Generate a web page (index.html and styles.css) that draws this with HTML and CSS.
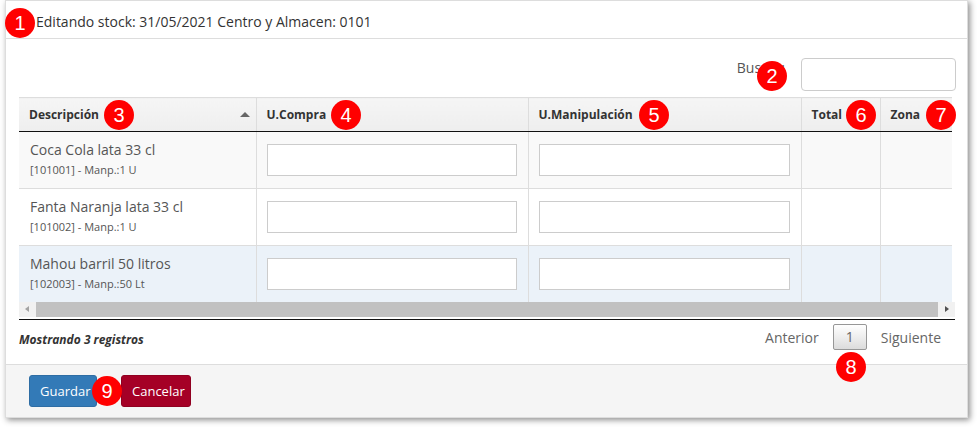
FILE: index.html
```html
<!DOCTYPE html>
<html lang="es">
<head>
    <meta charset="UTF-8">
    <meta name="viewport" content="width=device-width, initial-scale=1.0">
    <title>Editando stock</title>
    <link rel="stylesheet" href="styles.css">
</head>
<body>
    <div class="page">
        <div class="panel">
            <div class="panel-heading">Editando stock: 31/05/2021 Centro y Almacen: 0101</div>
            <div class="panel-body">
                <div class="filter">
                    <label for="buscar">Buscar:</label>
                    <input type="search" id="buscar" class="search">
                </div>
                <div class="scroll">
                    <table class="grid">
                        <colgroup>
                            <col class="c-desc">
                            <col class="c-compra">
                            <col class="c-manip">
                            <col class="c-total">
                            <col class="c-zona">
                        </colgroup>
                        <thead>
                            <tr>
                                <th class="sorted">Descripción <span class="sort-arrow"></span></th>
                                <th>U.Compra</th>
                                <th>U.Manipulación</th>
                                <th>Total</th>
                                <th>Zona</th>
                            </tr>
                        </thead>
                        <tbody>
                            <tr class="odd">
                                <td><div class="name">Coca Cola lata 33 cl</div><div class="sub">[101001] - Manp.:1 U</div></td>
                                <td><input type="text" class="cell-input"></td>
                                <td><input type="text" class="cell-input"></td>
                                <td></td>
                                <td></td>
                            </tr>
                            <tr>
                                <td><div class="name">Fanta Naranja lata 33 cl</div><div class="sub">[101002] - Manp.:1 U</div></td>
                                <td><input type="text" class="cell-input"></td>
                                <td><input type="text" class="cell-input"></td>
                                <td></td>
                                <td></td>
                            </tr>
                            <tr class="hover">
                                <td><div class="name">Mahou barril 50 litros</div><div class="sub">[102003] - Manp.:50 Lt</div></td>
                                <td><input type="text" class="cell-input"></td>
                                <td><input type="text" class="cell-input"></td>
                                <td></td>
                                <td></td>
                            </tr>
                        </tbody>
                    </table>
                </div>
                <div class="scrollbar">
                    <span class="arrow left"></span>
                    <span class="thumb"></span>
                    <span class="arrow right"></span>
                </div>
                <div class="table-foot">
                    <div class="info">Mostrando 3 registros</div>
                    <div class="paging">
                        <span class="page-link">Anterior</span>
                        <span class="page-current">1</span>
                        <span class="page-link">Siguiente</span>
                    </div>
                </div>
            </div>
            <div class="panel-footer">
                <button class="btn btn-primary">Guardar</button>
                <button class="btn btn-danger">Cancelar</button>
            </div>
        </div>

        <span class="badge" style="left: 5px; top: 8px;">1</span>
        <span class="badge" style="left: 757px; top: 61px;">2</span>
        <span class="badge" style="left: 104px; top: 100px;">3</span>
        <span class="badge" style="left: 331px; top: 100px;">4</span>
        <span class="badge" style="left: 639px; top: 100px;">5</span>
        <span class="badge" style="left: 846px; top: 100px;">6</span>
        <span class="badge" style="left: 926px; top: 100px;">7</span>
        <span class="badge" style="left: 836px; top: 352px;">8</span>
        <span class="badge" style="left: 92px; top: 376px;">9</span>
    </div>
</body>
</html>
```

FILE: styles.css
```css
body {
    margin: 0;
    background: #fff;
    font-family: 'Open Sans', 'Liberation Sans', sans-serif;
    color: #333;
}
.page {
    position: relative;
    width: 978px;
    height: 427px;
}
.panel {
    position: absolute;
    left: 5px;
    top: 0;
    width: 961px;
    height: 416px;
    border: 1px solid #ddd;
    background: #fff;
    box-shadow: 2px 2px 6px rgba(0, 0, 0, 0.45);
    display: flex;
    flex-direction: column;
}
.panel-heading {
    height: 38px;
    box-sizing: border-box;
    line-height: 41px;
    padding-left: 30px;
    font-size: 14px;
    border-bottom: 1px solid #ddd;
}
.panel-body {
    padding: 0 13px;
    flex: 1;
}
.filter {
    display: flex;
    justify-content: flex-end;
    align-items: center;
    margin-top: 19px;
    font-size: 14px;
    color: #555;
}
.filter label {
    margin-right: 16px;
    margin-top: -14px;
}
.search {
    width: 155px;
    height: 33px;
    box-sizing: border-box;
    border: 1px solid #ccc;
    border-radius: 4px;
    margin-right: -2px;
}
.scroll {
    margin-top: 6px;
    width: 933px;
    overflow: hidden;
}
.grid {
    table-layout: fixed;
    width: 961px;
    border-collapse: collapse;
    font-size: 14px;
}
.c-desc { width: 237px; }
.c-compra { width: 272px; }
.c-manip { width: 273px; }
.c-total { width: 79px; }
.c-zona { width: 100px; }
.grid th {
    background: linear-gradient(#f5f5f5, #eeeeee);
    font-size: 12px;
    font-weight: bold;
    text-align: left;
    color: #333;
    padding: 8px 10px;
    line-height: 17px;
    border-top: 1px solid #ddd;
    border-left: 1px solid #ddd;
    border-bottom: 1px solid #111;
}
.grid th:first-child,
.grid td:first-child {
    border-left: none;
}
.sorted {
    position: relative;
}
.sort-arrow {
    position: absolute;
    right: 6px;
    top: 14px;
    width: 0;
    height: 0;
    border-left: 5px solid transparent;
    border-right: 5px solid transparent;
    border-bottom: 5px solid #666;
}
.grid td {
    padding: 8px 11px 8px 10px;
    border-top: 1px solid #ddd;
    border-left: 1px solid #ddd;
    vertical-align: middle;
    height: 40px;
}
.grid tbody tr:first-child td {
    border-top: none;
}
.grid tr.odd td {
    background: #f9f9f9;
}
.grid tr.hover td {
    background: #ebf2f9;
}
.name {
    font-size: 14px;
    line-height: 20px;
    color: #555;
    padding-left: 1px;
}
.sub {
    font-size: 11px;
    line-height: 20px;
    color: #555;
    padding-left: 1px;
}
.cell-input {
    display: block;
    width: 100%;
    height: 32px;
    box-sizing: border-box;
    border: 1px solid #ccc;
    background: #fff;
}
.scrollbar {
    width: 936px;
    height: 15px;
    background: #f1f1f1;
    display: flex;
    align-items: center;
}
.thumb {
    flex: 1;
    height: 15px;
    background: #c1c1c1;
}
.arrow {
    width: 17px;
    height: 15px;
    position: relative;
}
.arrow::after {
    content: "";
    position: absolute;
    top: 4px;
    width: 0;
    height: 0;
    border-top: 3.5px solid transparent;
    border-bottom: 3.5px solid transparent;
}
.arrow.left::after {
    left: 6px;
    border-right: 4px solid #a3a3a3;
}
.arrow.right::after {
    left: 7px;
    border-left: 4px solid #505050;
}
.table-foot {
    margin-top: 2px;
    border-top: 1px solid #111;
    width: 936px;
    height: 45px;
    box-sizing: border-box;
    padding-top: 4px;
    display: flex;
    align-items: flex-start;
    justify-content: space-between;
}
.info {
    font-size: 12px;
    line-height: 17px;
    font-weight: bold;
    font-style: italic;
    color: #333;
    margin-top: 7px;
}
.paging {
    display: flex;
    align-items: center;
    font-size: 14px;
    color: #666;
    margin-right: 14px;
}
.page-current {
    width: 34px;
    height: 26px;
    box-sizing: border-box;
    border: 1px solid #979797;
    border-radius: 2px;
    background: linear-gradient(#fff, #dcdcdc);
    text-align: center;
    line-height: 24px;
    margin: 0 14px;
}
.panel-footer {
    height: 54px;
    box-sizing: border-box;
    background: #f5f5f5;
    border-top: 1px solid #ddd;
    padding: 10px 23px;
    display: flex;
    gap: 24px;
}
.btn {
    height: 32px;
    border: 1px solid transparent;
    border-radius: 3px;
    font-family: 'Open Sans', 'Liberation Sans', sans-serif;
    font-size: 13px;
    color: #fff;
    padding: 0 10px;
}
.btn-primary {
    background: #337ab7;
    border-color: #2e6da4;
    width: 68px;
}
.btn-danger {
    background: #a50026;
    border-color: #900021;
    width: 70px;
}
.badge {
    position: absolute;
    width: 30px;
    height: 30px;
    border-radius: 50%;
    background: #f00;
    color: #fff;
    font-family: 'Liberation Sans', Arial, sans-serif;
    font-size: 20px;
    line-height: 30px;
    text-align: center;
}
```
